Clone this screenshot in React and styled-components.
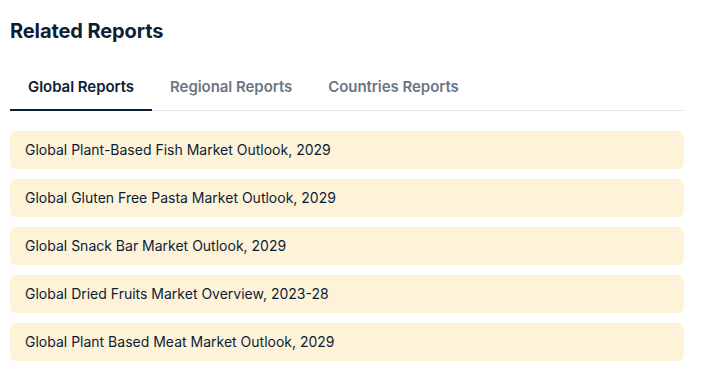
import React, { useState } from "react";
import styled, { createGlobalStyle } from "styled-components";

const Global = createGlobalStyle`
  html, body { margin: 0; padding: 0; background: #fff; }
  body { font-family: Inter, "Noto Sans", sans-serif; }
`;

const Wrap = styled.div`
  width: 674px;
  padding: 17px 0 0 10px;
`;

const Title = styled.h2`
  margin: 0;
  font-size: 20px;
  line-height: 28px;
  font-weight: 700;
  color: #0c1d36;
  letter-spacing: -0.1px;
`;

const Tabs = styled.div`
  display: flex;
  margin-top: 21px;
  border-bottom: 1px solid #e5e7eb;
`;

const Tab = styled.button`
  border: none;
  background: none;
  padding: 11px 18px 12px;
  margin-bottom: -1px;
  font-family: inherit;
  font-size: 15px;
  line-height: 20px;
  font-weight: 600;
  letter-spacing: -0.05px;
  cursor: pointer;
  color: ${(p) => (p.$active ? "#0c1d36" : "#6b7585")};
  border-bottom: 2px solid ${(p) => (p.$active ? "#0c1d36" : "transparent")};
`;

const List = styled.div`
  display: flex;
  flex-direction: column;
  gap: 10px;
  margin-top: 20px;
`;

const Item = styled.a`
  display: block;
  background: #fef3d8;
  border-radius: 6px;
  padding: 9px 15px;
  font-size: 14px;
  line-height: 20px;
  color: #0c1d36;
  text-decoration: none;
`;

const tabs = ["Global Reports", "Regional Reports", "Countries Reports"];
const items = [
  "Global Plant-Based Fish Market Outlook, 2029",
  "Global Gluten Free Pasta Market Outlook, 2029",
  "Global Snack Bar Market Outlook, 2029",
  "Global Dried Fruits Market Overview, 2023-28",
  "Global Plant Based Meat Market Outlook, 2029",
];

export default function App() {
  const [active, setActive] = useState(0);
  return (
    <>
      <Global />
      <Wrap>
        <Title>Related Reports</Title>
        <Tabs>
          {tabs.map((t, i) => (
            <Tab key={t} $active={i === active} onClick={() => setActive(i)}>
              {t}
            </Tab>
          ))}
        </Tabs>
        <List>
          {items.map((t) => (
            <Item key={t} href="#">
              {t}
            </Item>
          ))}
        </List>
      </Wrap>
    </>
  );
}
